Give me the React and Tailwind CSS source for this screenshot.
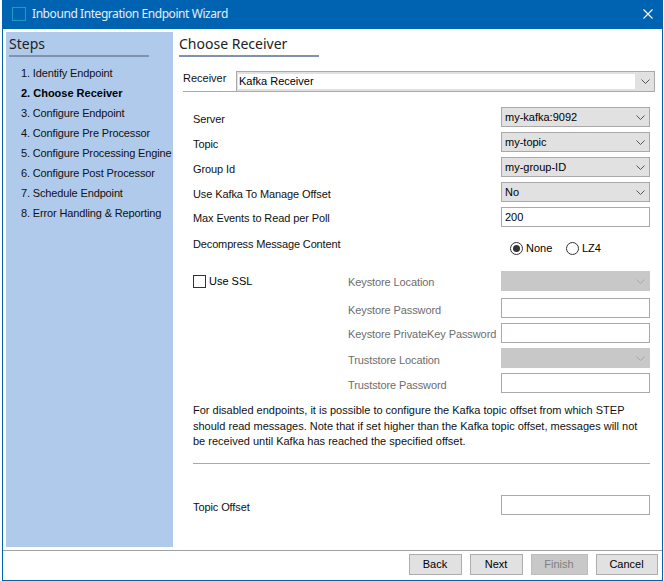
const font = "font-['Liberation_Sans','Noto_Sans',sans-serif]";
const headingFont = "font-['Noto_Sans','Liberation_Sans',sans-serif]";

function Chevron({ color = "#555" }) {
  return (
    <svg width="9" height="5" viewBox="0 0 9 5" fill="none" stroke={color} strokeWidth="1">
      <path d="M0.5 0.5 L4.5 4.5 L8.5 0.5" />
    </svg>
  );
}

function Select({ value, disabled }) {
  return (
    <div className={`flex h-[20px] w-[149px] shrink-0 items-center justify-between border pl-[3px] pr-[4px] text-[11px] ${disabled ? "border-[#c8c8c8] bg-[#c8c8c8]" : "border-[#a9a9a9] bg-[#e1e1e1]"}`}>
      <span className="text-black">{value}</span>
      <Chevron color={disabled ? "#a8a8a8" : "#555"} />
    </div>
  );
}

function Input({ value }) {
  return (
    <div className="flex h-[20px] w-[149px] shrink-0 items-center border border-[#a9a9a9] bg-white pl-[3px] text-[11px] text-black">
      {value}
    </div>
  );
}

function Row({ label, children, className = "", tone = "text-[#111]", drop = "pt-[5px]" }) {
  return (
    <div className={`flex items-center justify-between ${className}`}>
      <span className={`whitespace-nowrap text-[11px] leading-[15px] tracking-[-0.1px] ${tone} ${drop}`}>{label}</span>
      {children}
    </div>
  );
}

function Button({ children, disabled, className = "" }) {
  return (
    <div className={`flex h-[21px] items-center justify-center border pr-px text-[11px] ${disabled ? "border-[#bdbdbd] bg-[#c8c8c8] text-[#7f7f7f]" : "border-[#adadad] bg-[#e1e1e1] text-black"} ${className}`}>
      {children}
    </div>
  );
}

const steps = [
  "1. Identify Endpoint",
  "2. Choose Receiver",
  "3. Configure Endpoint",
  "4. Configure Pre Processor",
  "5. Configure Processing Engine",
  "6. Configure Post Processor",
  "7. Schedule Endpoint",
  "8. Error Handling & Reporting",
];

const muted = "text-[#6d6d6d]";

export default function App() {
  return (
    <div className={`h-[581px] w-[664px] overflow-hidden bg-white pl-[2px] pr-[1px] ${font}`}>
      <div className="flex h-[581px] flex-col border-x border-b border-[#0063b1]">
        <div className="-mx-px flex h-[29px] shrink-0 items-center justify-between bg-[#0063b1] pb-[2px] pl-[10px] pr-[10px]">
          <div className="flex items-center gap-[6px]">
            <div className="h-[14px] w-[14px] border border-[#1b9ac4]" />
            <span className={`text-[12px] tracking-[-0.43px] text-[#e6eef7] ${headingFont}`}>Inbound Integration Endpoint Wizard</span>
          </div>
          <svg width="10" height="10" viewBox="0 0 10 10" stroke="white" strokeWidth="1.1" fill="none">
            <path d="M0.5 0.5 L9.5 9.5 M9.5 0.5 L0.5 9.5" />
          </svg>
        </div>
        <div className="flex h-[521px] shrink-0 pl-[3px] pt-[3px]">
          <aside className="h-[515px] w-[167px] shrink-0 bg-[#b0caeb] px-[3px] pt-[2px]">
            <div className={`w-[140px] border-b-2 border-[#7f93ad] pb-[1px] text-[14px] leading-[20px] text-[#222] ${headingFont}`}>Steps</div>
            <ul className="mt-[6px] pl-[12px]">
              {steps.map((s, i) => (
                <li key={s} className={`whitespace-nowrap text-[11px] leading-[20px] ${i === 1 ? "font-bold text-black" : "tracking-[-0.14px] text-[#111]"}`}>{s}</li>
              ))}
            </ul>
          </aside>
          <main className="w-[483px] shrink-0 pl-[6px] pt-[2px]">
            <div className={`w-[140px] border-b-2 border-[#7f93ad] pb-[1px] text-[14px] leading-[20px] text-[#222] ${headingFont}`}>Choose Receiver</div>
            <div className="ml-[4px] mt-[14px] flex h-[21px] w-[472px] items-stretch">
              <div className="w-[53px] shrink-0 border-b border-[#a9a9a9] text-[11px] leading-[15px] text-[#111]">Receiver</div>
              <div className="flex flex-1 items-center border border-[#a9a9a9] bg-[#e1e1e1] pl-px">
                <div className="mb-[1px] flex h-[15px] flex-1 items-center bg-white pl-px text-[11px] text-black">Kafka Receiver</div>
                <span className="ml-[5px] mr-[4px] flex w-[10px] justify-center"><Chevron /></span>
              </div>
            </div>
            <div className="ml-[14px] mt-[15px] w-[457px]">
              <Row label="Server"><Select value="my-kafka:9092" /></Row>
              <Row label="Topic" className="mt-[5px]"><Select value="my-topic" /></Row>
              <Row label="Group Id" className="mt-[5px]"><Select value="my-group-ID" /></Row>
              <Row label="Use Kafka To Manage Offset" className="mt-[5px]"><Select value="No" /></Row>
              <Row label="Max Events to Read per Poll" className="mt-[5px]" drop="pt-[2px]"><Input value="200" /></Row>
              <div className="mt-[9px] flex h-[24px]">
                <span className="w-[317px] shrink-0 pt-px text-[11px] leading-[15px] tracking-[-0.14px] text-[#111]">Decompress Message Content</span>
                <div className="flex items-center text-[11px] text-black">
                  <span className="flex h-[13px] w-[13px] items-center justify-center rounded-full border border-[#333]">
                    <span className="h-[7px] w-[7px] rounded-full bg-[#333]" />
                  </span>
                  <span className="ml-[3px] w-[40px]">None</span>
                  <span className="h-[13px] w-[13px] rounded-full border border-[#333]" />
                  <span className="ml-[3px]">LZ4</span>
                </div>
              </div>
              <div className="mt-[11px] flex">
                <div className="flex h-[20px] w-[155px] shrink-0 items-center gap-[3px] text-[11px] text-black">
                  <span className="h-[13px] w-[13px] border border-[#333]" />
                  <span>Use SSL</span>
                </div>
                <div className="flex-1">
                  <Row label="Keystore Location" tone={muted} drop="pt-[2px]"><Select disabled /></Row>
                  <Row label="Keystore Password" tone={muted} drop="pt-[4px]" className="mt-[7px]"><Input /></Row>
                  <Row label="Keystore PrivateKey Password" tone={muted} drop="pt-[2px]" className="mt-[5px]"><Input /></Row>
                  <Row label="Truststore Location" tone={muted} drop="pt-[4px]" className="mt-[5px]"><Select disabled /></Row>
                  <Row label="Truststore Password" tone={muted} drop="pt-[4px]" className="mt-[5px]"><Input /></Row>
                </div>
              </div>
              <p className="mt-[10px] whitespace-nowrap text-[11px] leading-[15.5px] text-[#111]">
                For disabled endpoints, it is possible to configure the Kafka topic offset from which STEP
                <br />should read messages. Note that if set higher than the Kafka topic offset, messages will not
                <br />be received until Kafka has reached the specified offset.
              </p>
              <div className="mt-[13px] border-t border-[#a9a9a9]" />
              <Row label="Topic Offset" className="mt-[31px]"><Input /></Row>
            </div>
          </main>
        </div>
        <div className="flex flex-1 items-center justify-end gap-[8px] border-t border-[#a0a0a0] pb-[2px] pr-[4px]">
          <Button className="w-[53px]">Back</Button>
          <Button className="w-[53px]">Next</Button>
          <Button disabled className="w-[57px]">Finish</Button>
          <Button className="w-[62px]">Cancel</Button>
        </div>
      </div>
    </div>
  );
}
